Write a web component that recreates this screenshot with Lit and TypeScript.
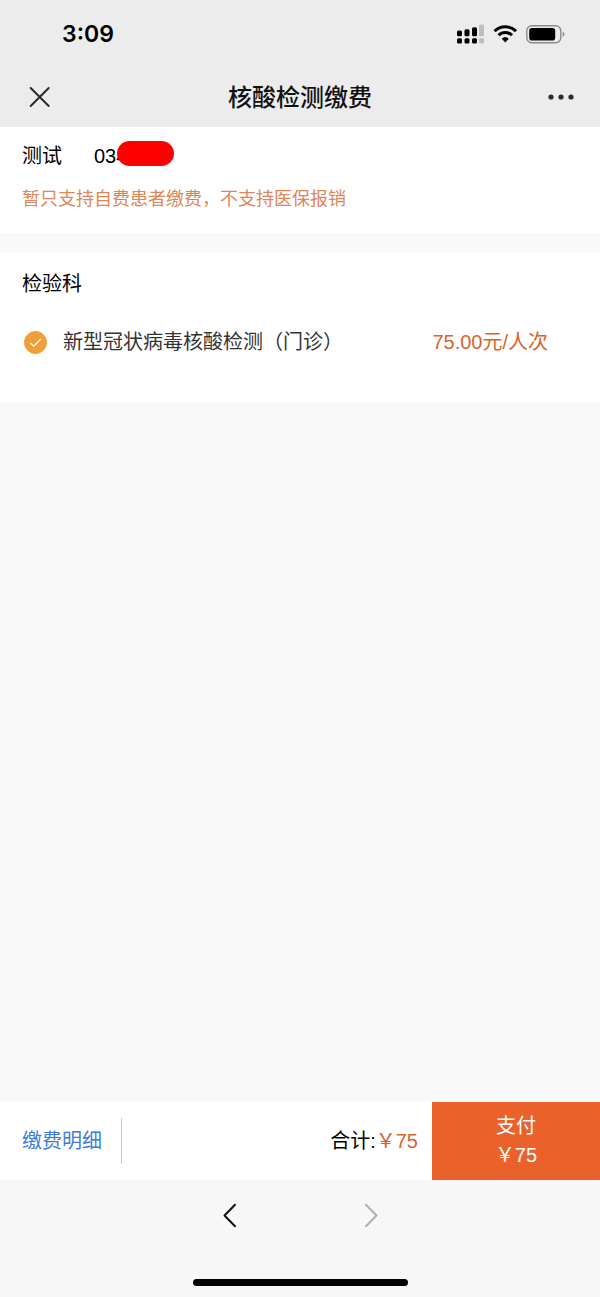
import { LitElement, html, css } from "lit";
import { customElement, property, state } from "lit/decorators.js";

@customElement("status-bar")
class StatusBar extends LitElement {
  static styles = css`
    :host {
      display: flex;
      align-items: center;
      justify-content: space-between;
      height: 68px;
      padding: 0 35px 0 62px;
    }
    .time {
      font: 600 23px/28px Inter, "Liberation Sans", sans-serif;
      color: #000;
    }
    .signals {
      display: flex;
      align-items: center;
      gap: 9px;
    }
    svg {
      display: block;
    }
  `;

  render() {
    return html`
      <span class="time">3:09</span>
      <div class="signals">
        <svg width="28" height="20" viewBox="0 0 28 20" aria-hidden="true">
          <rect x="1" y="6.5" width="5" height="5.7" rx="1.5" />
          <rect x="8.5" y="5.3" width="5" height="6.9" rx="1.5" />
          <rect x="16" y="3.2" width="5" height="9" rx="1.5" />
          <rect x="23" y="0.5" width="5" height="11.7" rx="1.5" fill="#bebebe" />
          <rect x="1" y="14.2" width="5" height="5.4" rx="1.5" />
          <rect x="8.5" y="14.2" width="5" height="5.4" rx="1.5" />
          <rect x="16" y="14.2" width="5" height="5.4" rx="1.5" />
          <rect x="23" y="14.2" width="5" height="5.4" rx="1.5" fill="#bebebe" />
        </svg>
        <svg width="24" height="20" viewBox="0 0 24 20" fill="none" stroke="#000" stroke-width="3" aria-hidden="true">
          <path d="M1.6 7.2a15 15 0 0 1 21.4 0" />
          <path d="M5.6 11.3a9.5 9.5 0 0 1 13.4 0" />
          <path d="M8.8 14.7a5.2 5.2 0 0 1 7 0L12.3 18.6z" fill="#000" stroke="none" />
        </svg>
        <svg width="39" height="20" viewBox="0 0 39 20" aria-hidden="true">
          <rect x="0.8" y="1.8" width="34" height="17" rx="5" fill="none" stroke="#8c8c8c" stroke-width="1.4" />
          <rect x="3.2" y="4.1" width="26" height="12.4" rx="2.8" />
          <path d="M36.6 7.8c2.6.8 2.6 4.2 0 5z" fill="#8c8c8c" />
        </svg>
      </div>
    `;
  }
}

@customElement("fee-item")
class FeeItem extends LitElement {
  @property() name = "";
  @property() price = "";
  @state() private checked = true;

  static styles = css`
    :host {
      display: block;
    }
    .row {
      display: flex;
      align-items: center;
      gap: 16px;
      padding: 0 30px 0 2px;
      font-size: 20px;
      line-height: 28px;
    }
    .tick {
      display: grid;
      place-items: center;
    }
    .box,
    .mark {
      grid-area: 1 / 1;
    }
    .box {
      appearance: none;
      width: 23px;
      height: 23px;
      margin: 0;
      border: 1px solid #ef9f38;
      border-radius: 50%;
    }
    .box:checked {
      background: #ef9f38;
    }
    .mark {
      pointer-events: none;
    }
    .name {
      flex: 1;
      color: #333;
    }
    .price {
      color: #d9632f;
    }
  `;

  render() {
    return html`
      <label class="row">
        <span class="tick">
          <input
            class="box"
            type="checkbox"
            .checked=${this.checked}
            @change=${(e: Event) => (this.checked = (e.target as HTMLInputElement).checked)}
          />
          <svg class="mark" width="13" height="11" viewBox="0 0 13 11" fill="none" stroke="#fff" stroke-width="1.3" aria-hidden="true">
            <path d="M1.5 6l3.2 3.2L11.8 2" />
          </svg>
        </span>
        <span class="name">${this.name}</span>
        <span class="price">${this.price}</span>
      </label>
    `;
  }
}

@customElement("app-root")
class AppRoot extends LitElement {
  static styles = css`
    :host {
      display: flex;
      flex-direction: column;
      min-height: 100vh;
      background: #f9f9f9;
      color: #000;
      font-family: "Liberation Sans", "Noto Sans CJK SC", sans-serif;
      font-size: 20px;
      line-height: 28px;
    }
    button {
      padding: 0;
      border: 0;
      background: none;
      font: inherit;
      color: inherit;
    }
    svg {
      display: block;
    }
    .top {
      background: #ececec;
    }
    .titlebar {
      display: grid;
      grid-template-columns: 1fr auto 1fr;
      align-items: center;
      height: 59px;
      padding: 0 26px;
    }
    .title {
      margin: 0;
      font-size: 24px;
      line-height: 36px;
      font-weight: 500;
      color: #111;
    }
    .close {
      justify-self: start;
    }
    .more {
      justify-self: end;
    }
    .card {
      padding: 0 22px;
      background: #fff;
    }
    .patient {
      padding-top: 15px;
      padding-bottom: 20px;
      margin-bottom: 20px;
    }
    .who {
      display: flex;
      gap: 32px;
    }
    .number {
      position: relative;
    }
    .mask {
      position: absolute;
      left: 23px;
      top: -1px;
      width: 57px;
      height: 25px;
      border-radius: 13px;
      background: #f00;
    }
    .notice {
      margin: 15px 0 0;
      font-size: 18px;
      color: #df8558;
    }
    .fees {
      padding-top: 17px;
      padding-bottom: 46px;
    }
    .dept {
      margin: 0 0 30px;
      font: inherit;
    }
    .space {
      flex: 1;
    }
    .paybar {
      display: flex;
      align-items: stretch;
      background: #fff;
    }
    .detail {
      align-self: center;
      padding: 9px 19px 9px 22px;
      border-right: 1px solid #c8c8c8;
      color: #3e7bd6;
      text-decoration: none;
    }
    .total {
      flex: 1;
      align-self: center;
      padding-right: 14px;
      text-align: right;
    }
    .sum {
      color: #d9632f;
    }
    .pay {
      display: flex;
      flex-direction: column;
      align-items: center;
      width: 28%;
      padding: 10px 0;
      background: #eb612c;
      color: #fff;
      line-height: 29px;
    }
    .browser {
      display: flex;
      flex-direction: column;
      align-items: center;
      padding: 22px 0 11px;
      background: #f7f7f7;
    }
    .history {
      display: flex;
      gap: 126px;
      margin-bottom: 50px;
    }
    .home {
      width: 215px;
      height: 7px;
      border-radius: 4px;
      background: #000;
    }
  `;

  render() {
    return html`
      <header class="top">
        <status-bar></status-bar>
        <div class="titlebar">
          <button aria-label="关闭" class="close">
            <svg width="28" height="24" viewBox="0 0 28 24" fill="none" stroke="#2a2a2a" stroke-width="2" stroke-linecap="round">
              <path d="M4.7 2l18 18M22.7 2L4.7 20" />
            </svg>
          </button>
          <h1 class="title">核酸检测缴费</h1>
          <button aria-label="更多" class="more">
            <svg width="28" height="10" viewBox="0 0 28 10" fill="#2a2a2a">
              <circle cx="5" cy="4" r="2.6" />
              <circle cx="15" cy="4" r="2.6" />
              <circle cx="25" cy="4" r="2.6" />
            </svg>
          </button>
        </div>
      </header>

      <section class="card patient">
        <div class="who">
          <span>测试</span>
          <span class="number">034<span class="mask"></span></span>
        </div>
        <p class="notice">暂只支持自费患者缴费，不支持医保报销</p>
      </section>

      <section class="card fees">
        <h2 class="dept">检验科</h2>
        <fee-item name="新型冠状病毒核酸检测（门诊）" price="75.00元/人次"></fee-item>
      </section>

      <div class="space"></div>

      <footer>
        <div class="paybar">
          <a class="detail" href="#detail">缴费明细</a>
          <span class="total">合计:<span class="sum">￥75</span></span>
          <button class="pay"><span>支付</span><span>￥75</span></button>
        </div>
        <nav class="browser">
          <div class="history">
            <button aria-label="后退">
              <svg width="16" height="27" viewBox="0 0 16 27" fill="none" stroke="#111" stroke-width="2" stroke-linecap="round" stroke-linejoin="round">
                <path d="M14 2.7L3.5 13.5L14 24.3" />
              </svg>
            </button>
            <button aria-label="前进" disabled>
              <svg width="16" height="27" viewBox="0 0 16 27" fill="none" stroke="#b0b0b0" stroke-width="2" stroke-linecap="round" stroke-linejoin="round">
                <path d="M3 2.7L13.5 13.5L3 24.3" />
              </svg>
            </button>
          </div>
          <div class="home"></div>
        </nav>
      </footer>
    `;
  }
}
